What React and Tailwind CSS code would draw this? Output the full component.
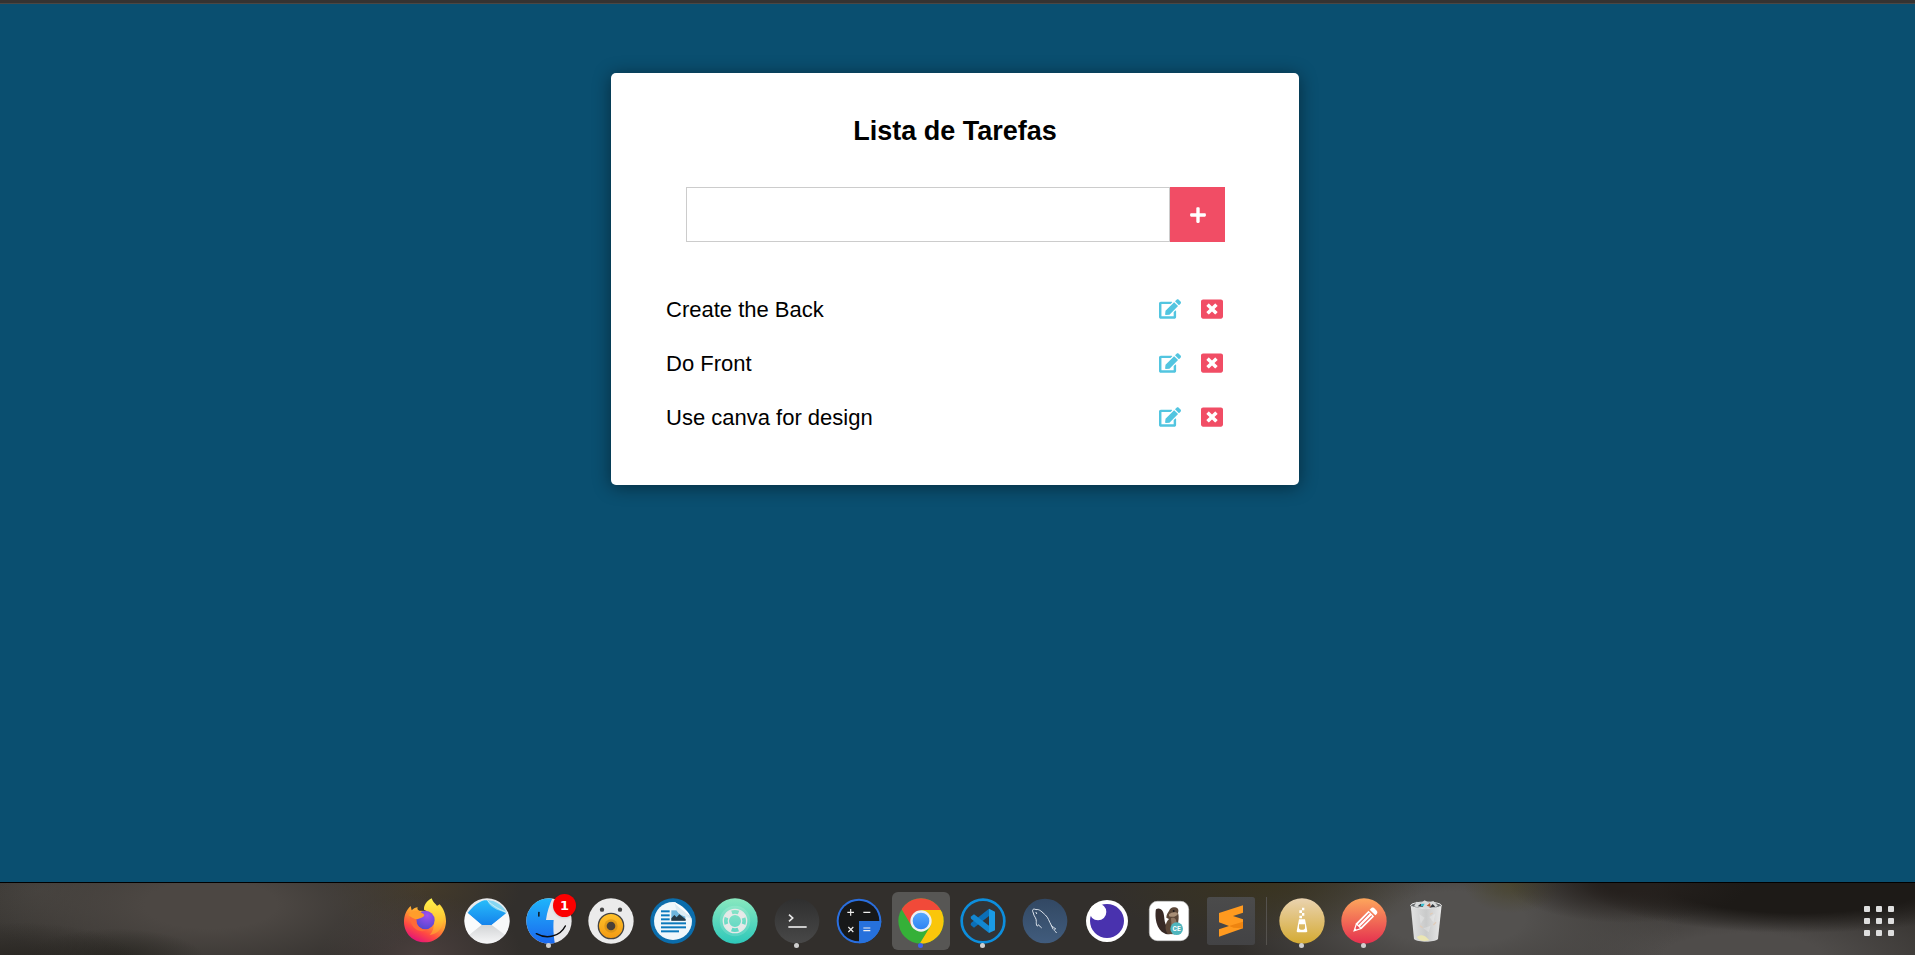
import { FaEdit, FaPlus, FaWindowClose } from "react-icons/fa";

const tasks = ["Create the Back", "Do Front", "Use canva for design"];

function Icon({ children }) {
  return (
    <svg viewBox="-72 -72 144 144" className="size-12 shrink-0" aria-hidden="true">
      {children}
    </svg>
  );
}

function Firefox() {
  return (
    <Icon>
      <defs>
        <linearGradient id="ffBody" x1="0.8" y1="0.1" x2="0.3" y2="1">
          <stop offset="0" stopColor="#ffd93c" />
          <stop offset="0.4" stopColor="#ff9a30" />
          <stop offset="0.7" stopColor="#ff4a42" />
          <stop offset="1" stopColor="#e2107c" />
        </linearGradient>
        <linearGradient id="ffFlame" x1="0.4" y1="0" x2="0.4" y2="1">
          <stop offset="0" stopColor="#fff44c" />
          <stop offset="0.6" stopColor="#ffc431" />
          <stop offset="1" stopColor="#ff8a35" />
        </linearGradient>
        <radialGradient id="ffGlobe" cx="0.6" cy="0.25" r="0.8">
          <stop offset="0" stopColor="#a050ee" />
          <stop offset="1" stopColor="#5147cf" />
        </radialGradient>
      </defs>
      <path d="M-63 2C-63-16-56-34-43-45L-40-32C-34-38-28-40-22-41C-24-36-22-33-18-31L10-30L44-50C56-37 63-18 63 0C63 36 35 64 0 64S-63 38-63 2Z" fill="url(#ffBody)" />
      <path d="M-3-34C-4-48 5-60 20-68C24-54 36-50 40-38L44-46C56-32 60-14 54 6C48 28 34 40 14 42C34 24 32-22-3-34Z" fill="url(#ffFlame)" />
      <circle cx="1" cy="-3" r="28" fill="url(#ffGlobe)" />
      <path d="M-50-18C-42-28-32-32-18-31C-14-25-4-24-2-18C-4-9-16-9-24-5C-32-6-42-10-50-18Z" fill="#ff9d2b" />
      <path d="M-46-14C-38-8-32-6-25-5C-28 12-14 27 4 26C-12 38-44 26-46-14Z" fill="#ff6a38" />
    </Icon>
  );
}

function Mail() {
  return (
    <Icon>
      <defs>
        <linearGradient id="mailBlue" x1="0" y1="0" x2="0" y2="1">
          <stop offset="0" stopColor="#27bcfa" />
          <stop offset="1" stopColor="#1583ec" />
        </linearGradient>
        <linearGradient id="mailFold" x1="0" y1="0" x2="0" y2="1">
          <stop offset="0" stopColor="#d2d4d6" />
          <stop offset="1" stopColor="#f7f7f8" />
        </linearGradient>
        <clipPath id="mailClip"><circle r="67" /></clipPath>
      </defs>
      <circle r="68" fill="#e9eaec" />
      <g clipPath="url(#mailClip)">
        <path d="M-58-24C-44-42-28-56-8-62L2-62C20-52 40-40 58-22L14 12H-16Z" fill="url(#mailBlue)" />
        <path d="M0-62C26-62 48-48 60-23C44-30 12-34 0-62Z" fill="#86d6f2" />
        <path d="M1-62C18-44 38-34 59-26" fill="none" stroke="#c8edf8" strokeWidth="3" />
        <path d="M-68-32L-16 12L-60 48H-80Z" fill="#fafbfc" />
        <path d="M68-32L14 12L58 44H80Z" fill="#f7f8f9" />
        <path d="M-16 12H14L58 46C34 76-34 76-58 46Z" fill="url(#mailFold)" />
      </g>
    </Icon>
  );
}

function Files() {
  return (
    <Icon>
      <defs>
        <linearGradient id="finderBlue" x1="0" y1="0" x2="0" y2="1">
          <stop offset="0" stopColor="#1fb6fb" />
          <stop offset="1" stopColor="#1a66ee" />
        </linearGradient>
        <clipPath id="finderClip"><circle r="68" /></clipPath>
      </defs>
      <circle r="68" fill="#e8e8ea" />
      <path clipPath="url(#finderClip)" d="M-70-70H11C2-50-6-28-9-3H14C12 22 14 46 18 70H-70Z" fill="url(#finderBlue)" />
      <rect x="-33" y="-28" width="5" height="15" rx="2" fill="#10202c" />
      <path d="M-38 38C-8 55 32 48 49 15" fill="none" stroke="#0b0b0d" strokeWidth="4.5" strokeLinecap="round" />
    </Icon>
  );
}

function Duck() {
  return (
    <Icon>
      <defs>
        <linearGradient id="duckRing" x1="0" y1="0" x2="0" y2="1">
          <stop offset="0" stopColor="#ffc22a" />
          <stop offset="1" stopColor="#f39a12" />
        </linearGradient>
      </defs>
      <circle r="68" fill="#ebebeb" />
      <circle cx="-27" cy="-34" r="6.5" fill="#444" />
      <circle cx="27" cy="-34" r="6.5" fill="#444" />
      <circle cy="15" r="38" fill="url(#duckRing)" stroke="#444" strokeWidth="4" />
      <circle cy="15" r="20" fill="#c98715" opacity="0.55" />
      <circle cy="15" r="13" fill="#484038" />
    </Icon>
  );
}

function Writer() {
  return (
    <Icon>
      <defs>
        <clipPath id="writerClip"><circle r="57" /></clipPath>
      </defs>
      <circle r="68" fill="#0b6dac" />
      <g clipPath="url(#writerClip)">
        <path d="M-60-60H4L58-6V60H-60Z" fill="#eff7fb" />
        <g fill="#0a79bd">
          <rect x="-36" y="-32" width="26" height="6" />
          <rect x="-36" y="-20" width="26" height="6" />
          <rect x="-36" y="-8" width="26" height="6" />
          <rect x="-36" y="4" width="75" height="6" />
          <rect x="-36" y="16" width="75" height="6" />
          <rect x="-36" y="28" width="54" height="6" />
        </g>
        <rect x="-5" y="-32" width="42" height="31" fill="#6db5dd" />
        <path d="M-5-1V-8L4-18L11-11L19-20L38-5V-1Z" fill="#263945" />
      </g>
      <path d="M4-56C8-36 20-28 34-24C46-20 52-14 57-5C48-28 28-48 4-56Z" fill="#fff" />
      <path d="M4-56C16-38 40-28 57-5C42-14 30-12 16-24C8-32 8-44 4-56Z" fill="#dcecf4" />
    </Icon>
  );
}

function Lifebuoy() {
  return (
    <Icon>
      <defs>
        <linearGradient id="buoyBg" x1="0" y1="0" x2="0" y2="1">
          <stop offset="0" stopColor="#89e8bf" />
          <stop offset="1" stopColor="#2ec8ba" />
        </linearGradient>
      </defs>
      <circle r="68" fill="url(#buoyBg)" />
      <circle r="46" fill="#fff" opacity="0.14" />
      <g fill="none" stroke="#e6e9e8">
        <circle r="35" strokeWidth="4" />
        <circle r="20" strokeWidth="4" />
        <circle r="27" strokeWidth="15" strokeDasharray="22.4 20" transform="rotate(21)" />
      </g>
    </Icon>
  );
}

function Terminal() {
  return (
    <Icon>
      <defs>
        <linearGradient id="termBg" x1="0" y1="0" x2="0" y2="1">
          <stop offset="0" stopColor="#2f2f2f" />
          <stop offset="1" stopColor="#484848" />
        </linearGradient>
      </defs>
      <circle r="67" fill="url(#termBg)" />
      <path d="M-24-19L-13-9L-24 1" fill="none" stroke="#e8e8e8" strokeWidth="5" />
      <path d="M-26 18H29" stroke="#e8e8e8" strokeWidth="5" />
    </Icon>
  );
}

function Calculator() {
  return (
    <Icon>
      <circle r="67" fill="#2a6fe0" />
      <circle r="61" fill="#171819" />
      <path d="M0 0H67A67 67 0 0 1 0 67Z" fill="#2671dc" />
      <g stroke="#eee" strokeWidth="3.5" fill="none">
        <path d="M-35-26H-15M-25-36V-16M13-26H34M-32 18L-17 33M-17 18L-32 33M13 21H34M13 29H34" />
      </g>
    </Icon>
  );
}

function Chrome() {
  return (
    <Icon>
      <defs>
        <clipPath id="chromeClip"><circle r="68" /></clipPath>
        <linearGradient id="chromeBlue" x1="0" y1="0" x2="0" y2="1">
          <stop offset="0" stopColor="#58a8fb" />
          <stop offset="1" stopColor="#2d83f5" />
        </linearGradient>
      </defs>
      <g clipPath="url(#chromeClip)">
        <rect x="-70" y="-70" width="140" height="140" fill="#35b038" />
        <path d="M-75-70H75V-33H0L-27 17L-57-34Z" fill="#f14a39" />
        <path d="M0-33H75V75H-8L29 14Z" fill="#fac60b" />
      </g>
      <circle r="32" fill="#eef0f2" />
      <circle r="25" fill="url(#chromeBlue)" />
    </Icon>
  );
}

function Code() {
  return (
    <Icon>
      <circle r="64" fill="#333436" stroke="#0d8edd" strokeWidth="8" />
      <path d="M18-37L36-28V28L18 36Z" fill="#1a9be6" />
      <path d="M18-37V-15L-27 20L-37 12L-36 6Z" fill="#0b6fb8" />
      <path d="M18 36V14L-27-20L-37-13L-36-7Z" fill="#1287d2" />
    </Icon>
  );
}

function Dolphin() {
  return (
    <Icon>
      <defs>
        <linearGradient id="dolphinBg" x1="0" y1="0" x2="0" y2="1">
          <stop offset="0" stopColor="#324863" />
          <stop offset="1" stopColor="#415c7d" />
        </linearGradient>
      </defs>
      <circle r="67" fill="url(#dolphinBg)" />
      <g fill="none" stroke="#dfe6ee" strokeWidth="3" strokeLinejoin="round" strokeLinecap="round">
        <path d="M-11 20C-18 16-19 7-21 13C-24 20-27 10-26 2C-25-9-34-14-35-24C-41-35-34-38-27-34C-17-37-8-26 1-18C10-10 12 1 19 13C22 19 29 19 32 24C27 25 24 26 31 31L34 35" />
        <path d="M19 13L24 24M-27-26L-25-22" />
      </g>
    </Icon>
  );
}

function Insomnia() {
  return (
    <Icon>
      <circle r="63" fill="#fff" />
      <circle r="51" fill="#4932ae" />
      <circle cx="-27" cy="-27" r="25" fill="#fff" />
    </Icon>
  );
}

function Beaver() {
  return (
    <Icon>
      <rect x="-59" y="-59" width="118" height="118" rx="24" fill="#fff" stroke="#c9c9c9" strokeWidth="2" />
      <path d="M-40-30C-40-40-24-40-18-28C-12-14-16 4-6 16C-2 22-2 34 2 40C-24 42-44 12-40-30Z" fill="#382a26" />
      <path d="M-4 39C-14 24-12 6 0-6L-8-10C-8-18-4-24 0-30C4-40 10-43 18-41C28-40 30-32 27-24C32-10 26 4 27 16L18 40Z" fill="#5b4637" />
      <path d="M0-20C8-28 22-28 27-22C24-14 12-10 0-14Z" fill="#a88e76" />
      <path d="M6-8C16-12 24-8 22 12L8 20Z" fill="#8d7460" />
      <circle cx="14" cy="-30" r="3" fill="#1f1917" />
      <circle cx="23" cy="23" r="19" fill="#4fb5bd" />
      <text x="23" y="30" textAnchor="middle" fontSize="20" fontWeight="700" fontFamily="Roboto, sans-serif" fill="#fff">CE</text>
    </Icon>
  );
}

function Sublime() {
  return (
    <Icon>
      <defs>
        <linearGradient id="subBg" x1="0" y1="0" x2="0" y2="1">
          <stop offset="0" stopColor="#4b4b4b" />
          <stop offset="1" stopColor="#434345" />
        </linearGradient>
      </defs>
      <rect x="-72" y="-72" width="144" height="144" rx="8" fill="url(#subBg)" />
      <path d="M-36-24L36-47V-25L6-15L36-5V22L-36 47V25L-6 15L-36 4Z" fill="#ff9a1f" />
      <path d="M-6 15L36 2V22L8 20Z" fill="#ee8410" />
    </Icon>
  );
}

function Archive() {
  return (
    <Icon>
      <defs>
        <linearGradient id="zipBg" x1="0" y1="0" x2="0" y2="1">
          <stop offset="0" stopColor="#ead3b0" />
          <stop offset="1" stopColor="#d4aa32" />
        </linearGradient>
      </defs>
      <circle r="68" fill="url(#zipBg)" />
      <g fill="#fff">
        <path d="M0-40H7V-32H0ZM-8-32H0V-24H-8ZM0-24H7V-16H0ZM-8-16H0V-8H-8Z" />
        <path fillRule="evenodd" d="M-9-5H9L16 31Q16 34 12 34H-12Q-16 34-16 31ZM-9 10V20Q-9 26 0 26T9 20V10Z" />
      </g>
    </Icon>
  );
}

function Pencil() {
  return (
    <Icon>
      <defs>
        <linearGradient id="penBg" x1="0" y1="0" x2="0" y2="1">
          <stop offset="0" stopColor="#fda65c" />
          <stop offset="1" stopColor="#e5304f" />
        </linearGradient>
      </defs>
      <circle r="68" fill="url(#penBg)" />
      <g transform="rotate(45)">
        <path d="M-12-36V-40Q-12-49-4-49H4Q12-49 12-40V-36Z" fill="#fff" />
        <path d="M-12-31H12V22L0 46L-12 22Z" fill="#fff" />
        <path d="M-5-28V20M5-28V20" stroke="#ee6155" strokeWidth="3" />
        <path d="M-7 24H7L2 34H-2Z" fill="#ee5055" />
      </g>
    </Icon>
  );
}

function Trash() {
  return (
    <Icon>
      <defs>
        <linearGradient id="binBody" x1="0" y1="0" x2="1" y2="0">
          <stop offset="0" stopColor="#e2e2e2" />
          <stop offset="0.5" stopColor="#c9caca" />
          <stop offset="1" stopColor="#e8e8e8" />
        </linearGradient>
      </defs>
      <path d="M-46-48L-36 54C-24 65 24 65 36 54L47-48Z" fill="url(#binBody)" />
      <ellipse cy="-47" rx="46" ry="10" fill="#6a6d6f" stroke="#e6e6e6" strokeWidth="3" />
      <path d="M-36-44L-28-58L-14-55L-4-62L8-55L22-60L36-45L18-38L-16-38Z" fill="#d8dada" />
      <path d="M-25-44L-16-52L-8-42ZM10-40L20-51L28-43Z" fill="#34383d" />
      <path d="M-14-52H-4L-8-44H-16Z" fill="#34bdd0" />
      <path d="M2-46L12-54L14-42Z" fill="#b45b35" />
      <path d="M-20-20L-4-10L-16 8ZM10-12L28-22L22 4ZM-8 22L14 14L8 34Z" fill="#fff" opacity="0.25" />
      <path d="M-28 48C-10 36 0 46 10 58C-8 62-22 59-28 48Z" fill="#ebe6b4" />
      <path d="M-18 14L-10 20M22 12L30 4M12-20L20-24" stroke="#e0cbb8" strokeWidth="4" />
    </Icon>
  );
}

const apps = [
  { name: "Firefox", Art: Firefox },
  { name: "Mail", Art: Mail },
  { name: "Files", Art: Files, dot: "bg-[#cfcfcf]", badge: "1" },
  { name: "Duck", Art: Duck },
  { name: "Writer", Art: Writer },
  { name: "Help", Art: Lifebuoy },
  { name: "Terminal", Art: Terminal, dot: "bg-[#cfcfcf]" },
  { name: "Calculator", Art: Calculator },
  { name: "Chrome", Art: Chrome, dot: "bg-[#3b62ee]", active: true },
  { name: "Code", Art: Code, dot: "bg-[#cfcfcf]" },
  { name: "MySQL Workbench", Art: Dolphin },
  { name: "Insomnia", Art: Insomnia },
  { name: "DBeaver", Art: Beaver },
  { name: "Sublime Text", Art: Sublime },
];

const tools = [
  { name: "Archive Manager", Art: Archive, dot: "bg-[#cfcfcf]" },
  { name: "Editor", Art: Pencil, dot: "bg-[#cfcfcf]" },
  { name: "Trash", Art: Trash },
];

function DockItem({ name, Art, dot, badge, active }) {
  return (
    <button
      type="button"
      aria-label={name}
      className={
        active
          ? "relative flex size-[58px] items-center justify-center rounded-md bg-[#575654]"
          : "relative flex size-[58px] items-center justify-center rounded-md"
      }
    >
      <Art />
      {dot && <span className={`absolute bottom-0.5 left-[26px] size-[5px] rounded-full ${dot}`} />}
      {badge && (
        <span className="absolute top-0.5 right-0.5 flex size-[23px] items-center justify-center rounded-full bg-[#fb0000] font-['DejaVu_Sans',sans-serif] text-[13px] leading-none font-bold text-white shadow">
          {badge}
        </span>
      )}
    </button>
  );
}

function TaskCard() {
  return (
    <section className="w-full max-w-[688px] rounded-[5px] bg-white px-[55px] pt-10 pb-[41px] shadow-[0_2px_18px_rgba(0,0,0,0.45)]">
      <h1 className="text-center text-[27px] leading-9 font-bold">Lista de Tarefas</h1>
      <form className="mt-[38px] mr-[19px] ml-5 flex h-[55px]" onSubmit={(e) => e.preventDefault()}>
        <input
          type="text"
          aria-label="Nova tarefa"
          className="min-w-0 flex-1 border border-[#cccccc] px-4 text-[22px] outline-none"
        />
        <button
          type="submit"
          aria-label="Adicionar"
          className="flex w-[55px] items-center justify-center bg-[#f14d65] text-white"
        >
          <FaPlus size={18} />
        </button>
      </form>
      <ul className="mt-10">
        {tasks.map((task) => (
          <li key={task} className="flex h-[54px] items-center justify-between pr-[21px] text-[22px]">
            <span>{task}</span>
            <span className="flex gap-5">
              <button type="button" aria-label={`Editar ${task}`} className="text-[#52c5e0]">
                <FaEdit size={22} />
              </button>
              <button type="button" aria-label={`Excluir ${task}`} className="text-[#f14d65]">
                <FaWindowClose size={22} />
              </button>
            </span>
          </li>
        ))}
      </ul>
    </section>
  );
}

export default function App() {
  return (
    <div className="flex min-h-screen flex-col bg-[#0a4f70] font-['Liberation_Sans',Arial,sans-serif] text-black">
      <div className="h-1 border-b border-[#4a4744] bg-[#353332]" />
      <main className="flex flex-1 items-start justify-center pt-[69px] pr-[5px]">
        <TaskCard />
      </main>
      <nav
        aria-label="Dock"
        className="flex h-[73px] items-center border-t border-black bg-[#322f2c] bg-[radial-gradient(ellipse_120px_40px_at_1%_110%,#292622,transparent),radial-gradient(ellipse_90px_30px_at_6%_105%,#292722,transparent),radial-gradient(ellipse_220px_80px_at_11%_30%,#4c4743_30%,transparent),radial-gradient(ellipse_180px_90px_at_2%_10%,#44413d,transparent),radial-gradient(ellipse_100px_60px_at_22%_100%,#4a3f3d,transparent),radial-gradient(ellipse_100px_60px_at_22%_0%,#453b2a,transparent),radial-gradient(ellipse_160px_60px_at_66%_0%,#3a3420,transparent),radial-gradient(ellipse_120px_40px_at_85%_0%,#25201d_20%,transparent),radial-gradient(ellipse_220px_50px_at_94%_0%,#1d1a17_60%,transparent),radial-gradient(ellipse_50px_30px_at_79%_0%,#4a4630,transparent),radial-gradient(ellipse_230px_90px_at_76%_50%,#53514f_30%,transparent),radial-gradient(ellipse_260px_70px_at_91%_100%,#4f4c4a_30%,transparent)] pt-1"
      >
        <div className="flex flex-1 items-center justify-center gap-1">
          {apps.map((app) => (
            <DockItem key={app.name} {...app} />
          ))}
          <span className="mx-0.5 h-12 w-px bg-[#55524e]" />
          {tools.map((app) => (
            <DockItem key={app.name} {...app} />
          ))}
        </div>
        <button type="button" aria-label="Mostrar aplicativos" className="flex w-16 justify-center pr-2">
          <span className="grid grid-cols-3 gap-1.5">
            {Array.from({ length: 9 }, (_, i) => (
              <span key={i} className="size-1.5 rounded-[1px] bg-[#dedede]" />
            ))}
          </span>
        </button>
      </nav>
    </div>
  );
}
